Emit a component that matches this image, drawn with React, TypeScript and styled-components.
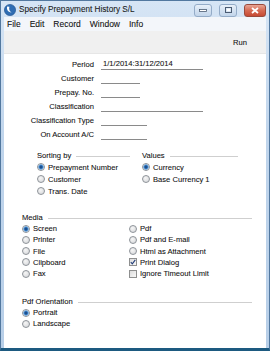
import React from "react";
import styled, { createGlobalStyle } from "styled-components";

const Global = createGlobalStyle`
  html, body { margin: 0; padding: 0; background: #ffffff; }
  body { font-family: "Liberation Sans", Arial, sans-serif; color: #111111; -webkit-text-stroke: 0.08px #111111; }
  * { box-sizing: border-box; }
`;

const Window = styled.div`
  width: 270px;
  height: 351px;
  display: flex;
  flex-direction: column;
  background: linear-gradient(#d6e5f5, #c0d5ec 40%, #b8cfe8);
  border: 1px solid #52789f;
  border-bottom: 3px solid #1d5a80;
  padding: 0 3px;
`;

const TitleBar = styled.div`
  height: 16px;
  display: flex;
  align-items: center;
  gap: 3px;
  padding-top: 1px;
`;

const TitleText = styled.span`
  font-size: 8.2px;
  color: #1b1b1b;
  flex: 1;
  white-space: nowrap;
`;

const Caption = styled.div<{ $w: number; $close?: boolean }>`
  width: ${(p) => p.$w}px;
  height: 13px;
  margin-left: 4px;
  margin-top: 1px;
  border-radius: 3px;
  border: 1px solid ${(p) => (p.$close ? "#9a4a3c" : "#94acc8")};
  background: ${(p) =>
    p.$close
      ? "linear-gradient(#e9a595, #d66a53 50%, #c64a33)"
      : "linear-gradient(#e8f0f9, #d3e1f1 50%, #c2d5ea)"};
  display: flex;
  align-items: center;
  justify-content: center;
`;

const MenuBar = styled.div`
  height: 14px;
  display: flex;
  align-items: center;
  gap: 9px;
  padding-left: 3px;
  background: #f3f6fa;
  font-size: 8.5px;
`;

const MenuItem = styled.span`
  color: #111111;
`;

const Toolbar = styled.div`
  height: 23px;
  display: flex;
  align-items: center;
  justify-content: flex-end;
  padding-right: 19px;
  background: #f0f0f0;
  border-bottom: 1px solid #e6e6e6;
  font-size: 7.6px;
`;

const Content = styled.div`
  flex: 1;
  background: #ffffff;
  font-size: 7.6px;
  display: flex;
  flex-direction: column;
`;

const FormGrid = styled.div`
  display: grid;
  grid-template-columns: 90px 1fr;
  grid-auto-rows: 14px;
  column-gap: 7px;
  padding-top: 3px;
  align-items: center;
`;

const Label = styled.span`
  text-align: right;
  white-space: nowrap;
`;

const Field = styled.div<{ $w: number }>`
  width: ${(p) => p.$w}px;
  height: 11px;
  border-bottom: 1px solid #8a8a8a;
  padding-left: 2px;
  line-height: 10px;
  white-space: nowrap;
`;

const GroupRow = styled.div<{ $left: number; $top: number; $gap?: number }>`
  display: flex;
  gap: ${(p) => p.$gap ?? 0}px;
  padding-left: ${(p) => p.$left}px;
  margin-top: ${(p) => p.$top}px;
`;

const Section = styled.div<{ $w?: number; $left?: number; $right?: number; $top?: number; $row?: number }>`
  width: ${(p) => (p.$w ? `${p.$w}px` : "auto")};
  padding-left: ${(p) => p.$left ?? 0}px;
  padding-right: ${(p) => p.$right ?? 0}px;
  margin-top: ${(p) => p.$top ?? 0}px;
  --row: ${(p) => p.$row ?? 12}px;
`;

const Header = styled.div`
  height: 11px;
  display: flex;
  align-items: center;
  white-space: nowrap;
  &::after {
    content: "";
    flex: 1;
    height: 1px;
    margin: 2px 0 0 5px;
    background: #cfcfcf;
  }
`;

const Columns = styled.div<{ $first: number }>`
  display: grid;
  grid-template-columns: ${(p) => p.$first}px 1fr;
`;

const Col = styled.div`
  display: flex;
  flex-direction: column;
`;

const Option = styled.div`
  height: var(--row);
  display: flex;
  align-items: center;
  gap: 3px;
  white-space: nowrap;
`;

const RadioDot = styled.span<{ $on?: boolean }>`
  width: 8px;
  height: 8px;
  border-radius: 50%;
  border: 1px solid #8e9399;
  background: ${(p) =>
    p.$on
      ? "radial-gradient(circle, #1d4f8c 0 1.2px, #3f86cf 1.8px, #8fc0ec 2.6px, #e6eef6 3px)"
      : "radial-gradient(circle at 40% 35%, #f6f6f6, #d2d4d7)"};
  flex: none;
`;

const CheckBox = styled.span`
  width: 8px;
  height: 8px;
  border: 1px solid #8e8f8f;
  background: linear-gradient(135deg, #dcdcdc, #f8f8f8);
  flex: none;
  display: flex;
  align-items: center;
  justify-content: center;
`;

const Radio = ({ on, children }: { on?: boolean; children: React.ReactNode }) => (
  <Option>
    <RadioDot $on={on} />
    <span>{children}</span>
  </Option>
);

const Check = ({ on, children }: { on?: boolean; children: React.ReactNode }) => (
  <Option>
    <CheckBox>
      {on && (
        <svg width="6" height="6" viewBox="0 0 6 6">
          <path d="M0.8 3.2 L2.3 4.8 L5.3 0.8" fill="none" stroke="#243f7a" strokeWidth="1.1" />
        </svg>
      )}
    </CheckBox>
    <span>{children}</span>
  </Option>
);

const AppIcon = () => (
  <svg width="12" height="12" viewBox="0 0 12 12">
    <circle cx="6" cy="6" r="5.6" fill="#2f6db3" />
    <circle cx="6" cy="6" r="5.6" fill="none" stroke="#1c4e8c" strokeWidth="0.6" />
    <path d="M3.2 2.6 C2.4 5.2 3.8 8.4 7.6 8.6 C5.6 7.4 4.6 5.4 5.4 2.8 Z" fill="#ffffff" />
  </svg>
);

const rows: [string, number, string?][] = [
  ["Period", 102, "1/1/2014:31/12/2014"],
  ["Customer", 39],
  ["Prepay. No.", 39],
  ["Classification", 102],
  ["Classification Type", 46],
  ["On Account A/C", 46],
];

export default function App() {
  return (
    <>
      <Global />
      <Window>
        <TitleBar>
          <AppIcon />
          <TitleText>Specify Prepayment History S/L</TitleText>
          <Caption $w={18}>
            <svg width="8" height="3" viewBox="0 0 8 3">
              <rect x="0.5" y="0.5" width="7" height="2" fill="#ffffff" stroke="#4a5b72" strokeWidth="0.8" />
            </svg>
          </Caption>
          <Caption $w={18}>
            <svg width="7" height="6" viewBox="0 0 7 6">
              <rect x="0.5" y="0.5" width="6" height="5" fill="none" stroke="#4a5b72" strokeWidth="1" />
              <rect x="1.8" y="1.8" width="3.4" height="2.4" fill="#ffffff" />
            </svg>
          </Caption>
          <Caption $w={22} $close>
            <svg width="8" height="7" viewBox="0 0 8 7">
              <path d="M1 1 L7 6 M7 1 L1 6" stroke="#ffffff" strokeWidth="1.8" />
            </svg>
          </Caption>
        </TitleBar>
        <MenuBar>
          <MenuItem>File</MenuItem>
          <MenuItem>Edit</MenuItem>
          <MenuItem>Record</MenuItem>
          <MenuItem>Window</MenuItem>
          <MenuItem>Info</MenuItem>
        </MenuBar>
        <Toolbar>Run</Toolbar>
        <Content>
          <FormGrid>
            {rows.map(([label, w, value]) => (
              <React.Fragment key={label}>
                <Label>{label}</Label>
                <Field $w={w}>{value ?? ""}</Field>
              </React.Fragment>
            ))}
          </FormGrid>

          <GroupRow $left={33} $top={9} $gap={12}>
            <Section $w={93} $row={12}>
              <Header>Sorting by</Header>
              <Col>
                <Radio on>Prepayment Number</Radio>
                <Radio>Customer</Radio>
                <Radio>Trans. Date</Radio>
              </Col>
            </Section>
            <Section $w={96} $row={12}>
              <Header>Values</Header>
              <Col>
                <Radio on>Currency</Radio>
                <Radio>Base Currency 1</Radio>
              </Col>
            </Section>
          </GroupRow>

          <Section $left={18} $right={14} $top={15} $row={11.25}>
            <Header>Media</Header>
            <Columns $first={107}>
              <Col>
                <Radio on>Screen</Radio>
                <Radio>Printer</Radio>
                <Radio>File</Radio>
                <Radio>Clipboard</Radio>
                <Radio>Fax</Radio>
              </Col>
              <Col>
                <Radio>Pdf</Radio>
                <Radio>Pdf and E-mail</Radio>
                <Radio>Html as Attachment</Radio>
                <Check on>Print Dialog</Check>
                <Check>Ignore Timeout Limit</Check>
              </Col>
            </Columns>
          </Section>

          <Section $left={18} $right={14} $top={17} $row={11}>
            <Header>Pdf Orientation</Header>
            <Col>
              <Radio on>Portrait</Radio>
              <Radio>Landscape</Radio>
            </Col>
          </Section>
        </Content>
      </Window>
    </>
  );
}
